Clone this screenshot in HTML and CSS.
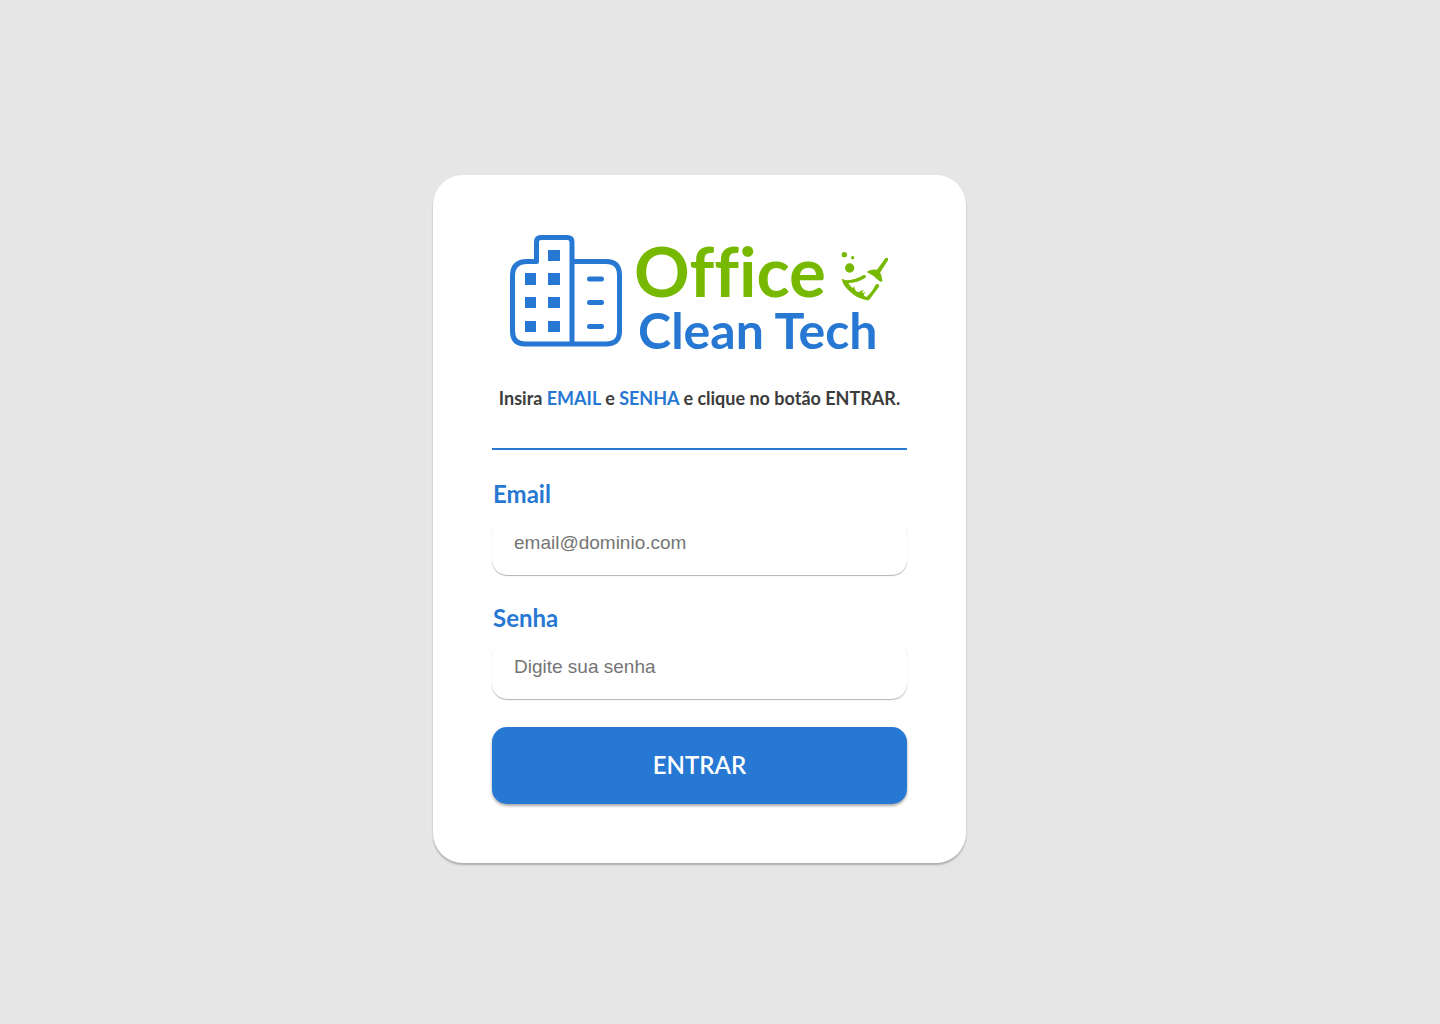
FILE: index.html
```html
<!DOCTYPE html>
<html lang="pt-BR">
<head>
<meta charset="utf-8">
<meta name="viewport" content="width=device-width, initial-scale=1">
<title>Office Clean Tech</title>
<link rel="stylesheet" href="styles.css">
</head>
<body>
<main class="card">
  <div class="logo">
    <svg class="logo-building" viewBox="0 0 112 112" aria-hidden="true">
      <g fill="none" stroke="#2678d3" stroke-width="5" stroke-linejoin="round">
        <path d="M62 109H15Q2.500 109 2.500 96V41Q2.500 26.500 17 26.500H26.500V7Q26.500 2.500 31 2.500H57Q62 2.500 62 7V26.500H96Q109.500 26.500 109.500 40V96Q109.500 109 96 109H62V26"/>
        <path d="M79.500 44H91.500M79.500 67.500H91.500M79.500 91.500H91.500" stroke-linecap="round"/>
      </g>
      <path fill="#2678d3" d="M38 15h12v11H38zM15 38h11v12H15zM38 38h12v12H38zM15 62h11v11H15zM38 62h12v11H38zM15 86h11v11H15zM38 86h12v11H38z"/>
    </svg>
    <div class="logo-text">
      <div class="logo-top">
        <span class="logo-office">Office</span>
        <svg class="logo-broom" viewBox="36 30 144 153" aria-hidden="true">
          <g fill="#77b900">
            <circle cx="46" cy="44" r="8"/>
            <circle cx="71" cy="53" r="5"/>
            <circle cx="62" cy="84" r="14"/>
            <path d="M169 55Q174 51 177 55Q179 58 176 62L153 98Q159 106 160 125Q154 127 147 120Q133 105 113 96Q124 86 144 89Z"/>
            <path d="M38 118Q42 115 46 120Q76 123 102 106Q108 103 111 108Q112 112 107 115Q86 129 58 129Q63 139 72 145L75 138L79 151Q84 155 88 157L104 149L99 161L109 155L104 166Q107 170 112 171Q128 158 140 134Q144 130 150 134Q152 138 149 142L122 178Q117 183 111 180Q84 175 64 156Q43 139 38 118Z"/>
          </g>
        </svg>
      </div>
      <span class="logo-clean">Clean Tech</span>
    </div>
  </div>
  <p class="intro">Insira <span class="accent">EMAIL</span> e <span class="accent">SENHA</span> e clique no botão ENTRAR.</p>
  <hr class="divider">
  <form class="form">
    <div class="field">
      <label class="label" for="email">Email</label>
      <input class="input" id="email" type="email" placeholder="email@dominio.com">
    </div>
    <div class="field">
      <label class="label" for="senha">Senha</label>
      <input class="input" id="senha" type="password" placeholder="Digite sua senha">
    </div>
    <button class="submit" type="submit">ENTRAR</button>
  </form>
</main>
</body>
</html>
```
FILE: styles.css
```css
* {
  box-sizing: border-box;
}

body {
  margin: 0;
  min-height: 100vh;
  padding: 14px 41px 0 0;
  display: flex;
  align-items: center;
  justify-content: center;
  background: #e6e6e6;
  font-family: Lato, "Open Sans", sans-serif;
  color: #3c3c3c;
}

.card {
  width: 100%;
  max-width: 533px;
  padding: 60px 59px 59px;
  border-radius: 30px;
  background: #fff;
  box-shadow: 0 2px 2px rgba(0, 0, 0, 0.25);
}

.logo {
  display: flex;
  justify-content: center;
  gap: 12px;
}

.logo-building {
  width: 112px;
  height: 112px;
  flex: none;
}

.logo-text {
  height: 119px;
}

.logo-top {
  display: flex;
  align-items: center;
  gap: 15px;
}

.logo-office {
  font-size: 69px;
  line-height: 72px;
  font-weight: 700;
  font-variant-ligatures: none;
  color: #77b900;
}

.logo-broom {
  width: 48px;
  height: 51px;
  margin-top: 8px;
}

.logo-clean {
  display: block;
  padding-left: 4px;
  font-size: 50px;
  line-height: 46px;
  font-weight: 700;
  color: #2678d3;
}

.intro {
  margin: 32px 0 38px;
  font-size: 18px;
  line-height: 24px;
  font-weight: 700;
  text-align: center;
  white-space: nowrap;
}

.accent {
  color: #2678d3;
}

.divider {
  height: 2px;
  margin: 0 0 29px;
  border: 0;
  background: #2678d3;
}

.form {
  display: flex;
  flex-direction: column;
  gap: 28px;
}

.field {
  display: flex;
  flex-direction: column;
  gap: 8px;
}

.label {
  padding-left: 1px;
  font-size: 24px;
  line-height: 30px;
  font-weight: 700;
  color: #2678d3;
}

.input {
  width: 100%;
  height: 58px;
  padding: 0 22px 6px;
  border: 0;
  border-radius: 15px;
  background: #fff;
  box-shadow: 0 1px 1px rgba(0, 0, 0, 0.3);
  font-family: "Liberation Sans", Arial, sans-serif;
  font-size: 19px;
}

.input::placeholder {
  color: #757575;
}

.submit {
  height: 77px;
  padding: 0 0 2px;
  border: 0;
  border-radius: 15px;
  background: #2678d3;
  box-shadow: 0 2px 3px rgba(0, 0, 0, 0.35);
  font-family: inherit;
  font-size: 24px;
  font-weight: 600;
  color: #fff;
}
```
